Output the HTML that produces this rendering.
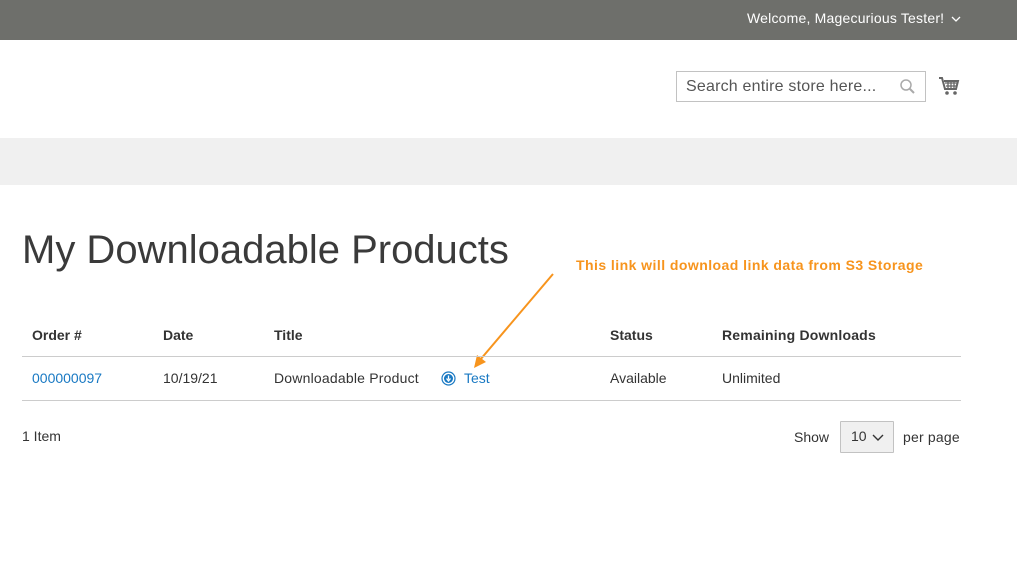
<!DOCTYPE html>
<html><head><style>
body{margin:0;width:1017px;height:562px;background:#fff;font-family:"Liberation Sans",sans-serif;color:#333;position:relative;overflow:hidden}
.a{position:absolute;white-space:nowrap}
</style></head><body>
<div class="a" style="left:0;top:0;width:1017px;height:40px;background:#6e6f6b"></div>
<div class="a" style="left:747px;top:10px;font-size:14px;color:#fff;letter-spacing:0.2px">Welcome, Magecurious Tester!</div>
<svg class="a" style="left:951px;top:15px" width="10" height="8" viewBox="0 0 10 8"><path d="M1 2l4 4 4-4" fill="none" stroke="#fff" stroke-width="1.3"/></svg>
<div class="a" style="left:676px;top:71px;width:250px;height:31px;border:1px solid #c2c2c2;box-sizing:border-box"></div>
<div class="a" style="left:686px;top:78px;font-size:16px;color:#555;letter-spacing:0.2px">Search entire store here...</div>
<svg class="a" style="left:899px;top:78px" width="17" height="17" viewBox="0 0 17 17"><circle cx="7" cy="7" r="5" fill="none" stroke="#aaa" stroke-width="1.5"/><path d="M10.5 10.5L15 15" stroke="#aaa" stroke-width="2"/></svg>
<svg class="a" style="left:938px;top:75px" width="22" height="22" viewBox="0 0 22 22"><path d="M1 3h3l3 11h11l2-8H6" fill="none" stroke="#666" stroke-width="2"/><path d="M7 8h12M8 11h10M10 6v8M13 6v8M16 6v8" stroke="#666" stroke-width="1.3"/><circle cx="9" cy="18" r="1.8" fill="#666"/><circle cx="17" cy="18" r="1.8" fill="#666"/></svg>
<div class="a" style="left:0;top:138px;width:1017px;height:47px;background:#f0f0f0"></div>
<div class="a" style="left:22px;top:228px;font-size:40px;color:#3a3a3a">My Downloadable Products</div>
<div class="a" style="left:576px;top:257px;font-size:14px;font-weight:bold;color:#f7941d;letter-spacing:0.45px">This link will download link data from S3 Storage</div>
<svg class="a" style="left:0;top:0" width="1017" height="562"><path d="M553 274L480 360" stroke="#f7941d" stroke-width="2"/><path d="M474 368L477 355L486 362Z" fill="#f7941d"/></svg>
<div class="a" style="left:32px;top:327px;font-size:14px;font-weight:bold">Order #</div>
<div class="a" style="left:163px;top:327px;font-size:14px;font-weight:bold">Date</div>
<div class="a" style="left:274px;top:327px;font-size:14px;font-weight:bold">Title</div>
<div class="a" style="left:610px;top:327px;font-size:14px;font-weight:bold">Status</div>
<div class="a" style="left:722px;top:327px;font-size:14px;font-weight:bold;letter-spacing:0.2px">Remaining Downloads</div>
<div class="a" style="left:22px;top:356px;width:939px;height:1px;background:#ccc"></div>
<div class="a" style="left:32px;top:370px;font-size:14px;color:#1979c3">000000097</div>
<div class="a" style="left:163px;top:370px;font-size:14px">10/19/21</div>
<div class="a" style="left:274px;top:370px;font-size:14px;letter-spacing:0.2px">Downloadable Product</div>
<svg class="a" style="left:441px;top:371px" width="15" height="15" viewBox="0 0 15 15"><circle cx="7.5" cy="7.5" r="6.5" fill="none" stroke="#1979c3" stroke-width="1.2"/><circle cx="7.5" cy="7.5" r="4.5" fill="#1979c3"/><path d="M7.5 4.5v4M5.5 7.5l2 2.5 2-2.5" stroke="#fff" stroke-width="1.3" fill="none"/></svg>
<div class="a" style="left:464px;top:370px;font-size:14px;color:#1979c3">Test</div>
<div class="a" style="left:610px;top:370px;font-size:14px">Available</div>
<div class="a" style="left:722px;top:370px;font-size:14px">Unlimited</div>
<div class="a" style="left:22px;top:400px;width:939px;height:1px;background:#ccc"></div>
<div class="a" style="left:22px;top:428px;font-size:14px">1 Item</div>
<div class="a" style="left:794px;top:429px;font-size:14px">Show</div>
<div class="a" style="left:840px;top:421px;width:54px;height:32px;border:1px solid #c2c2c2;box-sizing:border-box;background:#f0f0f0;border-radius:1px"></div>
<div class="a" style="left:851px;top:428px;font-size:14px">10</div>
<svg class="a" style="left:872px;top:433px" width="12" height="9" viewBox="0 0 12 9"><path d="M1 2l5 5 5-5" fill="none" stroke="#333" stroke-width="1.4"/></svg>
<div class="a" style="left:903px;top:429px;font-size:14px;letter-spacing:0.2px">per page</div>
</body></html>
